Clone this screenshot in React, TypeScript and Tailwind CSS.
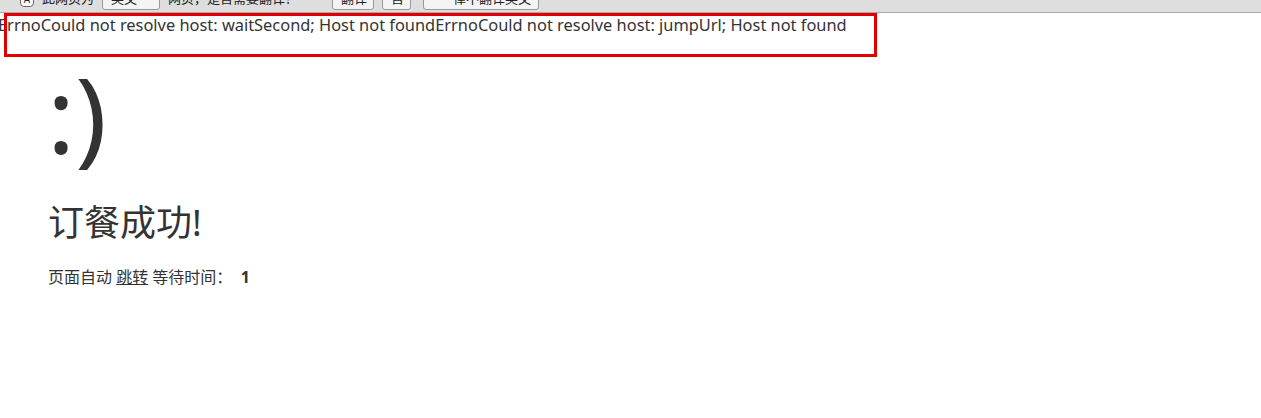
import React from 'react';

const cjk = "font-['Noto_Sans','Noto_Sans_CJK_SC',sans-serif]";

function TranslateBar() {
  return (
    <div className="h-[13px] overflow-hidden border-b border-[#a9a9a9] bg-[#dedede]">
      <div className={`-mt-[13px] flex h-[24px] items-center gap-2 whitespace-nowrap pl-[20px] text-[13px] text-[#222] ${cjk}`}>
        <span className="flex h-[15px] w-[14px] items-center justify-center rounded-sm border border-[#666] bg-white text-[10px] leading-none">A</span>
        <span>此网页为</span>
        <span className="w-[58px] rounded-[3px] border border-[#999] bg-[#f4f4f4] px-2">英文</span>
        <span>网页，是否需要翻译？</span>
        <span className="ml-[26px] w-[42px] rounded-[3px] border border-[#999] bg-[#f4f4f4] px-2">翻译</span>
        <span className="w-[29px] rounded-[3px] border border-[#999] bg-[#f4f4f4] px-2">否</span>
        <span className="ml-1 w-[116px] rounded-[3px] border border-[#999] bg-[#f4f4f4] px-4">一律不翻译英文</span>
      </div>
    </div>
  );
}

export default function App() {
  return (
    <div className={`relative min-h-[418px] bg-white text-[#333] ${cjk}`}>
      <TranslateBar />
      <div className="relative">
        <p className="-ml-[2px] pt-[1px] text-[16.4px] leading-[22px] whitespace-nowrap text-[#333]">
          ErrnoCould not resolve host: waitSecond; Host not foundErrnoCould not resolve host: jumpUrl; Host not found
        </p>
        <div className="pointer-events-none absolute left-[4px] top-0 h-[44px] w-[873px] border-[3px] border-[#e00000]" />
      </div>
      <div className="pl-[47px] pt-[22px]">
        <div className="text-[105px] leading-[111px] text-[#333]">:)</div>
        <h1 className="mt-[32px] pl-px text-[36px] leading-[44px] text-[#333]">订餐成功!</h1>
        <p className="mt-[22px] pl-px text-[16px] leading-[20px] text-[#333]">
          页面自动 <a className="underline">跳转</a> 等待时间：&nbsp; <b>1</b>
        </p>
      </div>
    </div>
  );
}
